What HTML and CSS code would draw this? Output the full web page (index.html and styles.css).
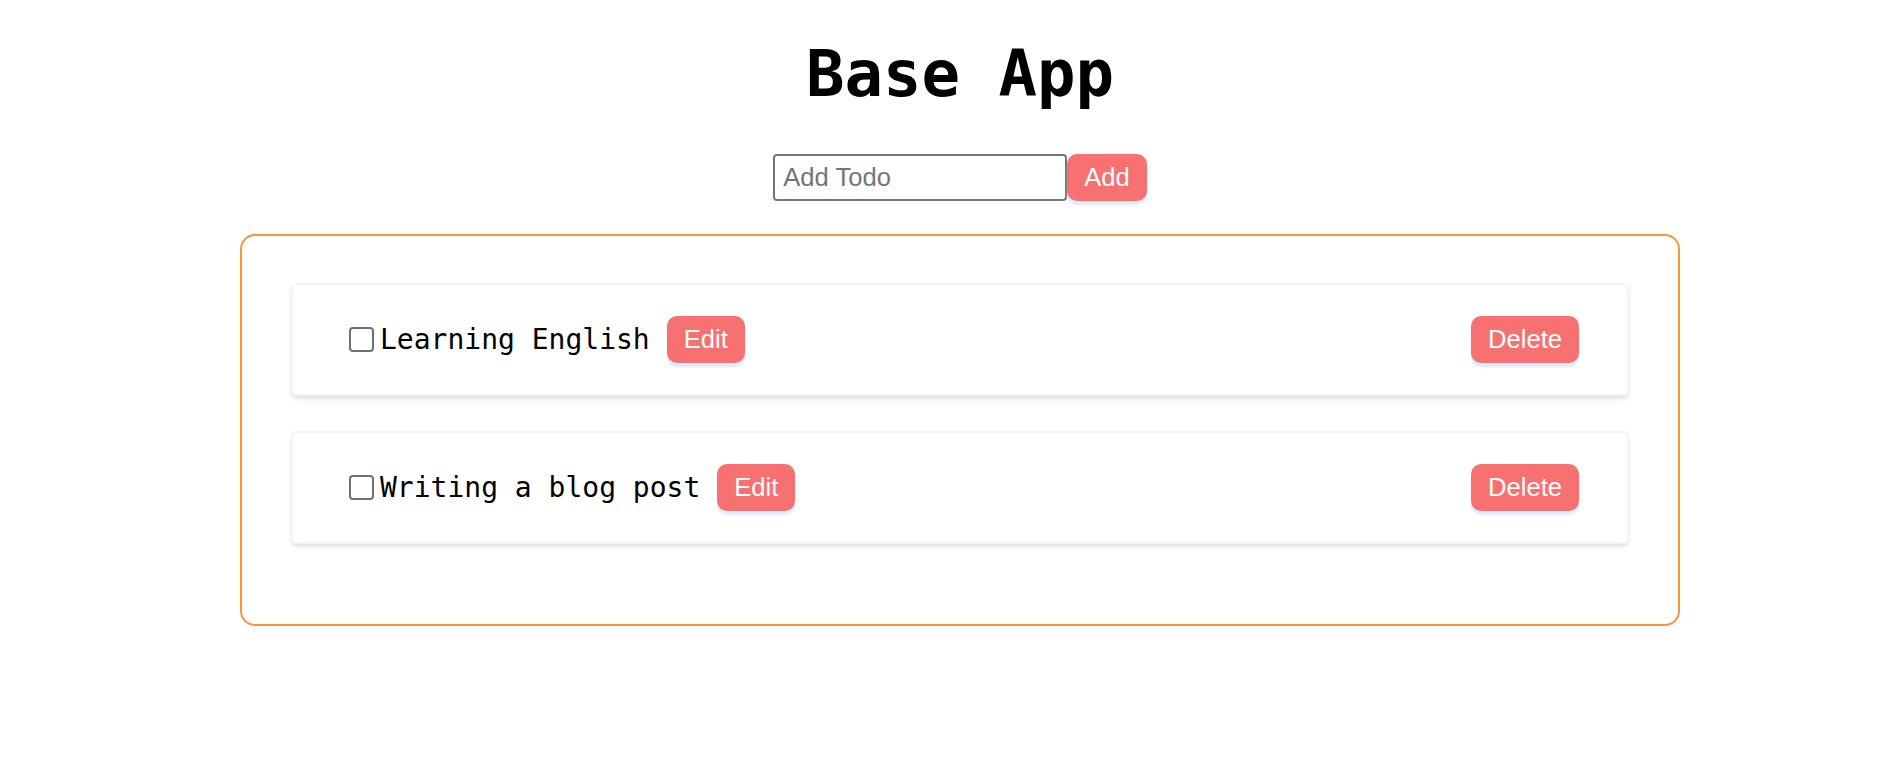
FILE: index.html
```html
<!DOCTYPE html>
<html lang="en">
<head>
<meta charset="utf-8">
<title>Base App</title>
<link rel="stylesheet" href="styles.css">
</head>
<body>
<div class="app">
  <h1 class="title">Base App</h1>
  <form class="add-form">
    <input class="add-input" type="text" placeholder="Add Todo">
    <button class="btn" type="button">Add</button>
  </form>
  <div class="list">
    <div class="card">
      <div class="card-left">
        <input class="check" type="checkbox">
        <span class="todo-text">Learning English</span>
        <button class="btn" type="button">Edit</button>
      </div>
      <button class="btn" type="button">Delete</button>
    </div>
    <div class="card">
      <div class="card-left">
        <input class="check" type="checkbox">
        <span class="todo-text">Writing a blog post</span>
        <button class="btn" type="button">Edit</button>
      </div>
      <button class="btn" type="button">Delete</button>
    </div>
  </div>
</div>
</body>
</html>
```
FILE: styles.css
```css
html, body {
  margin: 0;
  padding: 0;
  background: #ffffff;
}

.app {
  display: flex;
  flex-direction: column;
  align-items: center;
  padding: 36px 0 0 16px;
  font-family: "Liberation Sans", Arial, sans-serif;
}

.title {
  margin: 0;
  font-family: "DejaVu Sans Mono", monospace;
  font-weight: bold;
  font-size: 64px;
  line-height: 77px;
  color: #000;
}

.add-form {
  display: flex;
  margin-top: 41px;
}

.add-input {
  box-sizing: border-box;
  width: 294px;
  height: 47px;
  margin: 0;
  padding: 0 8px;
  border: 2px solid #767676;
  border-radius: 4px;
  font-family: "Liberation Sans", Arial, sans-serif;
  font-size: 25.6px;
  color: #000;
  outline: none;
}

.add-input::placeholder {
  color: #757575;
}

.btn {
  margin: 0;
  padding: 9px 17px;
  border: none;
  border-radius: 10px;
  background: #f87171;
  color: #ffffff;
  font-family: "Liberation Sans", Arial, sans-serif;
  font-size: 25.6px;
  line-height: 29px;
  box-shadow: 0 4px 2px rgba(191, 219, 254, 0.55);
  cursor: pointer;
}

.list {
  box-sizing: border-box;
  width: 1440px;
  margin-top: 33px;
  padding: 47px 49px 80px;
  border: 2px solid #fb923c;
  border-radius: 15px;
  display: flex;
  flex-direction: column;
  gap: 35px;
}

.card {
  box-sizing: border-box;
  height: 113px;
  padding: 0 48px 0 56px;
  border: 2px solid #f1f4f8;
  border-radius: 6px;
  background: #fff;
  box-shadow: 0 4px 6px -1px rgba(0, 0, 0, 0.1), 0 2px 4px -2px rgba(0, 0, 0, 0.1);
  display: flex;
  align-items: center;
  justify-content: space-between;
}

.card-left {
  display: flex;
  align-items: center;
}

.check {
  appearance: none;
  -webkit-appearance: none;
  box-sizing: border-box;
  width: 25px;
  height: 25px;
  margin: 0 6px 0 0;
  border: 2px solid #707070;
  border-radius: 4px;
  background: #fff;
}

.todo-text {
  font-family: "DejaVu Sans Mono", monospace;
  font-size: 28px;
  color: #000;
  margin-right: 17px;
}
```
